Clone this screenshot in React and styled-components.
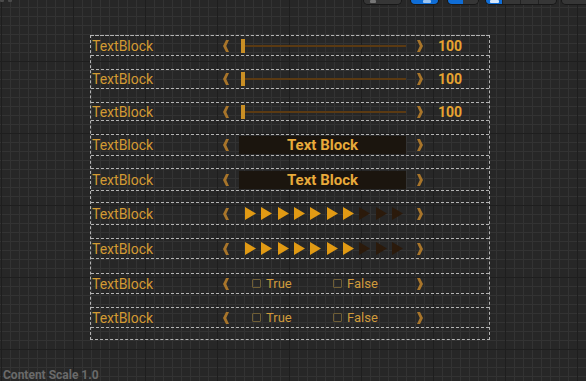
import React from "react";
import styled, { createGlobalStyle } from "styled-components";

const Global = createGlobalStyle`
  html, body { margin: 0; padding: 0; background: #262626; }
  body { font-family: Roboto, "Liberation Sans", sans-serif; }
`;

const Canvas = styled.div`
  position: relative;
  width: 586px;
  height: 381px;
  overflow: hidden;
  box-sizing: border-box;
  padding: 35px 0 0 90px;
  background-color: #272727;
  background-image:
    linear-gradient(#1e1e1e 1px, transparent 1px),
    linear-gradient(90deg, #1e1e1e 1px, transparent 1px),
    linear-gradient(#333333 1px, transparent 1px),
    linear-gradient(90deg, #333333 1px, transparent 1px);
  background-size: 72px 72px, 72px 72px, 9px 9px, 9px 9px;
  background-position: 0 61px, 1px 0, 0 7px, 1px 0;
`;

const Designer = styled.div`
  width: 400px;
  box-sizing: border-box;
  border: 1px dashed #b4b4b4;
  padding-bottom: 11px;
  display: flex;
  flex-direction: column;
`;

const Row = styled.div`
  height: ${(p) => p.$h}px;
  margin-top: ${(p) => p.$mt}px;
  box-sizing: border-box;
  border-top: 1px dashed #b4b4b4;
  border-bottom: 1px dashed #b4b4b4;
  display: flex;
  align-items: center;
`;

const Label = styled.div`
  width: 132px;
  padding-left: 1px;
  box-sizing: border-box;
  font-size: 14px;
  color: #d39a33;
  line-height: 16px;
  white-space: nowrap;
`;

const ChevronBox = styled.svg`
  width: 6px;
  height: 12px;
  flex: none;
  margin-left: ${(p) => p.$ml || 0}px;
  margin-right: ${(p) => p.$mr || 0}px;
`;

const Chevron = ({ dir, ml, mr }) => (
  <ChevronBox viewBox="0 0 6 12" $ml={ml} $mr={mr}>
    <polygon
      points={
        dir === "left"
          ? "3,0 6,0 3.2,6 6,12 3,12 0,6"
          : "3,0 0,0 2.8,6 0,12 3,12 6,6"
      }
      fill="#a8752a"
    />
  </ChevronBox>
);

const Content = styled.div`
  width: 167px;
  height: 100%;
  flex: none;
  display: flex;
  align-items: center;
  position: relative;
`;

const SliderTrack = styled.div`
  flex: 1;
  display: flex;
  align-items: center;
  padding-left: 2px;
`;

const Handle = styled.div`
  width: 4px;
  height: 14px;
  background: #c98f25;
  flex: none;
`;

const Track = styled.div`
  flex: 1;
  height: 2px;
  background: #5b3a12;
`;

const Value = styled.div`
  margin-left: 15px;
  font-size: 14px;
  font-weight: 700;
  color: #e6a431;
  line-height: 16px;
`;

const TextBox = styled.div`
  width: 100%;
  height: 18px;
  background: #1b150e;
  display: flex;
  align-items: center;
  justify-content: center;
  font-size: 15px;
  font-weight: 700;
  color: #e8aa3b;
  line-height: 18px;
`;

const Triangles = styled.div`
  display: flex;
  align-items: center;
  gap: 5.33px;
  padding-left: 6px;
`;

const Tri = styled.svg`
  width: 11px;
  height: 13px;
  flex: none;
`;

const Checks = styled.div`
  display: flex;
  align-items: center;
  padding-left: 13px;
`;

const CheckItem = styled.div`
  display: flex;
  align-items: center;
  gap: 5px;
  width: ${(p) => p.$w}px;
  font-size: 13px;
  color: #cf9a3c;
  line-height: 15px;
`;

const Box = styled.div`
  width: 9px;
  height: 9px;
  box-sizing: border-box;
  border: 1.5px solid #6f5e35;
  border-radius: 1px;
  flex: none;
`;

const ScaleLabel = styled.div`
  position: absolute;
  left: 3px;
  top: 368px;
  font-size: 12px;
  font-weight: 700;
  color: #6a6a6a;
  line-height: 14px;
  white-space: nowrap;
`;

const Toolbar = styled.div`
  position: absolute;
  top: -12px;
  left: 363px;
  right: -10px;
  height: 17px;
  display: flex;
  align-items: stretch;
`;

const ToolGroup = styled.div`
  display: flex;
  margin-left: ${(p) => p.$ml || 0}px;
  border-radius: 0 0 5px 5px;
  overflow: hidden;
  border: 1px solid #181818;
  border-top: none;
`;

const ToolBtn = styled.div`
  width: ${(p) => p.$w}px;
  background: ${(p) => (p.$blue ? "#0f6dd6" : "#363636")};
  border-left: ${(p) => (p.$div ? "1px solid #222" : "none")};
  position: relative;
`;

const BtnIcon = styled.div`
  position: absolute;
  bottom: 1px;
  left: ${(p) => p.$l}px;
  width: ${(p) => p.$w}px;
  height: 3px;
  background: ${(p) => p.$c};
  border-radius: 1px;
`;

const TopLeftBits = styled.div`
  position: absolute;
  top: -2px;
  left: 0;
  width: 13px;
  height: 4px;
  display: flex;
  gap: 4px;
`;

const Bit = styled.div`
  width: 4px;
  height: 4px;
  background: #4a4a4a;
  border-radius: 1px;
`;

const rows = [
  { type: "slider", h: 21, mt: -1 },
  { type: "slider", h: 20, mt: 13 },
  { type: "slider", h: 19, mt: 13 },
  { type: "text", h: 22, mt: 13 },
  { type: "text", h: 23, mt: 12 },
  { type: "tri", h: 23, mt: 11 },
  { type: "tri", h: 21, mt: 13 },
  { type: "check", h: 21, mt: 14 },
  { type: "check", h: 21, mt: 13 },
];

function RowContent({ type }) {
  if (type === "slider") {
    return (
      <SliderTrack>
        <Handle />
        <Track />
      </SliderTrack>
    );
  }
  if (type === "text") {
    return <TextBox>Text Block</TextBox>;
  }
  if (type === "tri") {
    return (
      <Triangles>
        {Array.from({ length: 10 }).map((_, i) => (
          <Tri key={i} viewBox="0 0 11 13">
            <polygon points="0,0 11,6.5 0,13" fill={i < 7 ? "#e19a14" : "#2b1a0b"} />
          </Tri>
        ))}
      </Triangles>
    );
  }
  return (
    <Checks>
      <CheckItem $w={81}>
        <Box />
        True
      </CheckItem>
      <CheckItem $w={60}>
        <Box />
        False
      </CheckItem>
    </Checks>
  );
}

export default function App() {
  return (
    <>
      <Global />
      <Canvas>
        <TopLeftBits>
          <Bit />
          <Bit />
        </TopLeftBits>
        <Toolbar>
          <ToolGroup>
            <ToolBtn $w={39}>
              <BtnIcon $l={6} $w={6} $c="#777" />
            </ToolBtn>
          </ToolGroup>
          <ToolGroup $ml={8}>
            <ToolBtn $w={28} $blue>
              <BtnIcon $l={12} $w={8} $c="#9cc4f0" />
            </ToolBtn>
          </ToolGroup>
          <ToolGroup $ml={8}>
            <ToolBtn $w={16} $blue />
            <ToolBtn $w={15} />
          </ToolGroup>
          <ToolGroup $ml={6}>
            <ToolBtn $w={17} $blue>
              <BtnIcon $l={4} $w={9} $c="#d8e8fb" />
            </ToolBtn>
            <ToolBtn $w={18} $div />
            <ToolBtn $w={18} $div />
            <ToolBtn $w={18} $div />
          </ToolGroup>
          <ToolGroup $ml={4}>
            <ToolBtn $w={34} />
          </ToolGroup>
        </Toolbar>

        <Designer>
          {rows.map((r, i) => (
            <Row key={i} $h={r.h} $mt={r.mt}>
              <Label>TextBlock</Label>
              <Chevron dir="left" mr={10} />
              <Content>
                <RowContent type={r.type} />
              </Content>
              <Chevron dir="right" ml={11} />
              {r.type === "slider" && <Value>100</Value>}
            </Row>
          ))}
        </Designer>

        <ScaleLabel>Content Scale 1.0</ScaleLabel>
      </Canvas>
    </>
  );
}
